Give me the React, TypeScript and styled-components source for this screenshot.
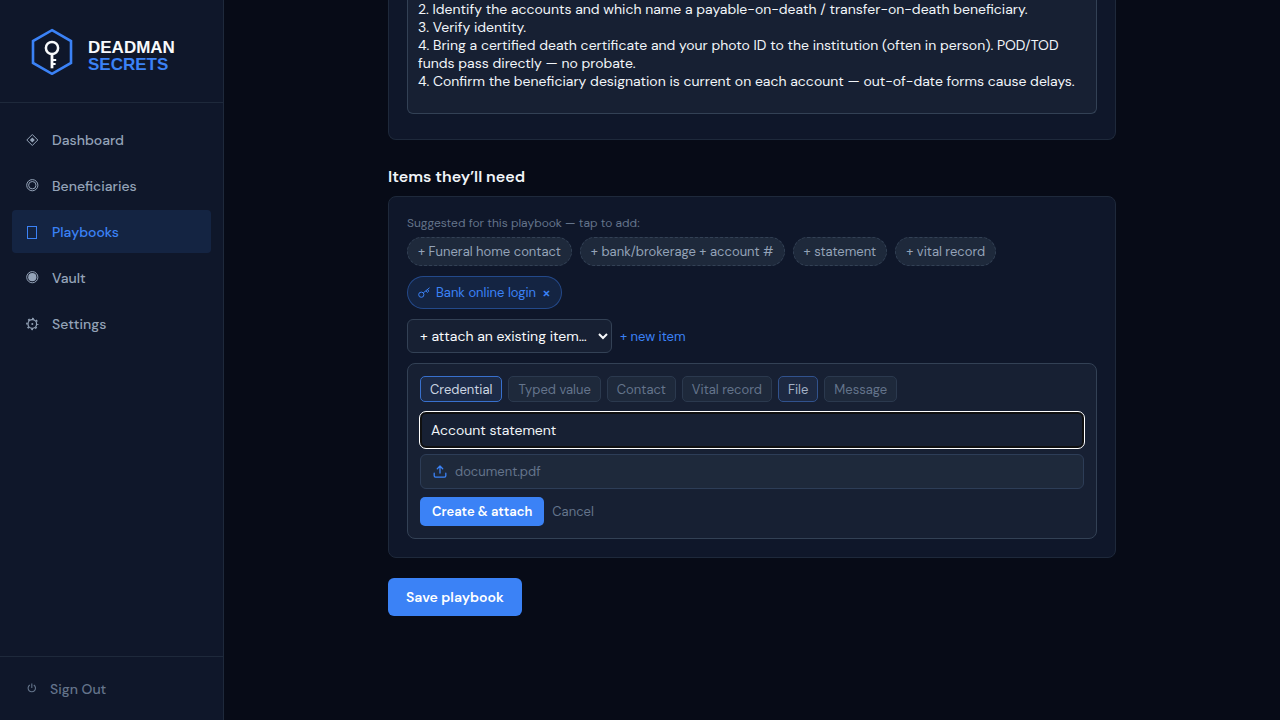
import React, { useState } from "react";
import styled, { createGlobalStyle, css } from "styled-components";

const GlobalStyle = createGlobalStyle`
  *, *::before, *::after { box-sizing: border-box; }
  body {
    margin: 0;
    background: #070b17;
    color: #f1f5f9;
    font-family: "DM Sans", Inter, "Liberation Sans", sans-serif;
    font-size: 14px;
  }
  button, input, select, textarea { font: inherit; }
  button { cursor: pointer; }
`;

const Shell = styled.div`
  display: flex;
  height: 100vh;
  overflow: hidden;
`;

const Sidebar = styled.aside`
  display: flex;
  flex-direction: column;
  flex: none;
  width: 224px;
  background: #0f172a;
  border-right: 1px solid #1e293b;
`;

const Brand = styled.a`
  display: flex;
  align-items: center;
  gap: 12px;
  height: 103px;
  padding: 0 28px;
  border-bottom: 1px solid #1e293b;
  text-decoration: none;
`;

const BrandName = styled.span`
  display: flex;
  flex-direction: column;
  padding-top: 10px;
  color: #f8fafc;
  font: bold 17px/17px "Liberation Sans", sans-serif;
`;

const BrandAccent = styled.span`
  color: #3b82f6;
`;

const Nav = styled.nav`
  display: flex;
  flex: 1;
  flex-direction: column;
  gap: 3px;
  padding: 15px 12px;
`;

const NavLink = styled.a<{ $active?: boolean }>`
  display: flex;
  align-items: center;
  gap: 12px;
  height: 43px;
  padding: 0 12px;
  border-radius: 4px;
  color: ${(p) => (p.$active ? "#3b82f6" : "#94a3b8")};
  background: ${(p) => (p.$active ? "rgba(59, 130, 246, 0.12)" : "transparent")};
  font-weight: 500;
  text-decoration: none;
`;

const SidebarFooter = styled.div`
  padding: 10px 12px;
  border-top: 1px solid #1e293b;
`;

const SignOut = styled.button`
  display: flex;
  align-items: center;
  gap: 10px;
  width: 100%;
  height: 43px;
  padding: 0 12px;
  border: 0;
  background: none;
  color: #64748b;
  font-weight: 500;
`;

const Main = styled.main`
  flex: 1;
  min-width: 0;
  overflow: hidden;
`;

const Content = styled.form`
  max-width: 728px;
  margin: 0 auto;
`;

const Card = styled.section<{ $continued?: boolean }>`
  display: flex;
  flex-direction: column;
  padding: 18px;
  border: 1px solid #1e293b;
  border-radius: 8px;
  background: #0f172a;
  ${(p) =>
    p.$continued &&
    css`
      padding-top: 0;
      padding-bottom: 25px;
      border-top: 0;
      border-radius: 0 0 8px 8px;
    `}
`;

const Steps = styled.textarea`
  display: block;
  width: 100%;
  padding: 0 10px 5px;
  border: 1px solid #334155;
  border-top: 0;
  border-radius: 0 0 6px 6px;
  background: #172033;
  color: #f1f5f9;
  line-height: 18px;
  resize: none;
  overflow: hidden;
`;

const Heading = styled.h2`
  margin: 25px 0 7px;
  font-size: 16px;
  font-weight: 600;
  line-height: 24px;
`;

const Hint = styled.p`
  margin: 0 0 6px;
  color: #64748b;
  font-size: 12px;
  line-height: 16px;
`;

const Row = styled.div<{ $gap?: number; $below?: number }>`
  display: flex;
  flex-wrap: wrap;
  align-items: center;
  gap: ${(p) => p.$gap ?? 8}px;
  margin-bottom: ${(p) => p.$below ?? 10}px;
`;

const Suggestion = styled.button`
  height: 29px;
  padding: 0 10px;
  border: 1px dashed #334155;
  border-radius: 15px;
  background: #1e293b;
  color: #94a3b8;
  font-size: 13px;
`;

const Chip = styled.span`
  display: inline-flex;
  align-items: center;
  gap: 6px;
  height: 33px;
  padding: 0 10px;
  border: 1px solid rgba(59, 130, 246, 0.4);
  border-radius: 17px;
  background: rgba(59, 130, 246, 0.12);
  color: #3b82f6;
  font-size: 13px;
`;

const ChipRemove = styled.button`
  padding: 0;
  border: 0;
  background: none;
  color: inherit;
  font-size: 16px;
  font-weight: 500;
  line-height: 16px;
`;

const ItemSelect = styled.select`
  width: 205px;
  height: 34px;
  padding: 0 8px;
  border: 1px solid #334155;
  border-radius: 6px;
  background: #172033;
  color: #f8fafc;
`;

const TextButton = styled.button<{ $muted?: boolean }>`
  padding: 0;
  border: 0;
  background: none;
  color: ${(p) => (p.$muted ? "#64748b" : "#3b82f6")};
  font-size: 13px;
`;

const Panel = styled.div`
  display: flex;
  flex-direction: column;
  padding: 12px;
  border: 1px solid #334155;
  border-radius: 8px;
  background: #172033;
`;

const kindTone = {
  idle: css`
    border-color: #2b394e;
    background: #1e293b;
    color: #64748b;
  `,
  leaving: css`
    border-color: #3870cd;
    background: #1d2b47;
    color: #cbd5e1;
  `,
  entering: css`
    border-color: #31528d;
    background: #1d2942;
    color: #a3b1c6;
  `,
};

const Kind = styled.button<{ $tone: keyof typeof kindTone }>`
  height: 26px;
  padding: 0 9px;
  border: 1px solid;
  border-radius: 5px;
  font-size: 13px;
  ${(p) => kindTone[p.$tone]}
`;

const NameInput = styled.input`
  width: 100%;
  height: 36px;
  margin-bottom: 6px;
  padding: 0 9px;
  border: 2px solid #101010;
  border-radius: 6px;
  outline: 1px solid #ffffff;
  background: #172033;
  color: #f1f5f9;
`;

const FileField = styled.button`
  display: flex;
  align-items: center;
  gap: 8px;
  width: 100%;
  height: 35px;
  margin-bottom: 8px;
  padding: 0 12px;
  border: 1px solid #2d3d57;
  border-radius: 6px;
  background: #1e293b;
  color: #64748b;
  font-size: 13px;
`;

const Primary = styled.button<{ $large?: boolean }>`
  height: ${(p) => (p.$large ? 38 : 29)}px;
  padding: 0 ${(p) => (p.$large ? 18 : 12)}px;
  border: 0;
  border-radius: ${(p) => (p.$large ? 6 : 5)}px;
  background: #3b82f6;
  color: #ffffff;
  font-size: ${(p) => (p.$large ? 14 : 13)}px;
  font-weight: 600;
`;

const Actions = styled.div`
  padding-top: 20px;
`;

const LogoMark = () => (
  <svg width="48" height="48" viewBox="0 0 48 48" fill="none" aria-hidden="true">
    <path d="M24 3.200 43 14v22L24 46.800 5 36V14Z" stroke="#3b82f6" strokeWidth="2.600" />
    <circle cx="24" cy="21" r="6.100" stroke="#f8fafc" strokeWidth="2.500" />
    <path d="M24 27V41.300" stroke="#f8fafc" strokeWidth="2.800" />
    <path d="M25 33h3.200M25 37h2.600" stroke="#f8fafc" strokeWidth="1.900" />
  </svg>
);

const KeyIcon = () => (
  <svg width="12" height="12" viewBox="0 0 12 12" fill="none" stroke="currentColor" aria-hidden="true">
    <circle cx="3.300" cy="7.700" r="2.600" />
    <path d="M5.300 5.900 11.500.8M7.800 3.900l1.500 1.500 1.500-1.300L9.400 2.500" />
  </svg>
);

const UploadIcon = () => (
  <svg
    width="14"
    height="14"
    viewBox="0 0 14 14"
    fill="none"
    stroke="#3b82f6"
    strokeWidth="1.300"
    strokeLinecap="round"
    strokeLinejoin="round"
    aria-hidden="true"
  >
    <path d="M7 8V1.200M4.300 3.700 7 1l2.700 2.700M1.200 8.200v2.600c0 .8.500 1.300 1.300 1.300h9c.8 0 1.300-.5 1.300-1.300V8.200" />
  </svg>
);

const NavIcon = ({ children }: { children: React.ReactNode }) => (
  <svg width="16" height="16" viewBox="0 0 16 16" fill="none" stroke="currentColor" aria-hidden="true">
    {children}
  </svg>
);

const navItems = [
  {
    label: "Dashboard",
    icon: (
      <>
        <path d="M8.300 2.500 13.800 8l-5.500 5.500L2.800 8Z" />
        <path d="M8.300 5.500 10.800 8l-2.500 2.500L5.800 8Z" fill="currentColor" stroke="none" />
      </>
    ),
  },
  {
    label: "Beneficiaries",
    icon: (
      <>
        <circle cx="8.300" cy="7.200" r="5.600" />
        <circle cx="8.300" cy="7.200" r="3.700" />
      </>
    ),
  },
  { label: "Playbooks", icon: <rect x="3.500" y="2.500" width="9" height="12" />, active: true },
  {
    label: "Vault",
    icon: (
      <>
        <circle cx="8.300" cy="7.200" r="5.600" />
        <circle cx="8.300" cy="7.200" r="4.100" fill="currentColor" stroke="none" />
      </>
    ),
  },
  {
    label: "Settings",
    icon: (
      <>
        <circle cx="8.300" cy="8" r="4.300" strokeWidth="1.200" />
        <circle cx="8.300" cy="8" r="5.400" strokeWidth="1.500" strokeDasharray="1.800 2.440" strokeDashoffset="0.900" />
        <circle cx="8.300" cy="8" r="1" fill="currentColor" stroke="none" />
      </>
    ),
  },
];

const suggestions = ["Funeral home contact", "bank/brokerage + account #", "statement", "vital record"];

const kinds: { label: string; tone: keyof typeof kindTone }[] = [
  { label: "Credential", tone: "leaving" },
  { label: "Typed value", tone: "idle" },
  { label: "Contact", tone: "idle" },
  { label: "Vital record", tone: "idle" },
  { label: "File", tone: "entering" },
  { label: "Message", tone: "idle" },
];

const stepsText = `2. Identify the accounts and which name a payable-on-death / transfer-on-death beneficiary.
3. Verify identity.
4. Bring a certified death certificate and your photo ID to the institution (often in person). POD/TOD funds pass directly — no probate.
4. Confirm the beneficiary designation is current on each account — out-of-date forms cause delays.`;

export default function App() {
  const [steps, setSteps] = useState(stepsText);
  const [name, setName] = useState("Account statement");

  return (
    <>
      <GlobalStyle />
      <Shell>
        <Sidebar>
          <Brand href="#">
            <LogoMark />
            <BrandName>
              DEADMAN <BrandAccent>SECRETS</BrandAccent>
            </BrandName>
          </Brand>
          <Nav>
            {navItems.map((item) => (
              <NavLink key={item.label} href="#" $active={item.active}>
                <NavIcon>{item.icon}</NavIcon>
                {item.label}
              </NavLink>
            ))}
          </Nav>
          <SidebarFooter>
            <SignOut type="button">
              <NavIcon>
                <path d="M5.800 4A3.700 3.700 0 1 0 9.800 4M7.800 2.500V7" strokeWidth="1.100" />
              </NavIcon>
              Sign Out
            </SignOut>
          </SidebarFooter>
        </Sidebar>
        <Main>
          <Content onSubmit={(e) => e.preventDefault()}>
            <Card $continued>
              <Steps
                aria-label="Steps"
                rows={6}
                value={steps}
                spellCheck={false}
                onChange={(e) => setSteps(e.target.value)}
              />
            </Card>
            <Heading>Items they’ll need</Heading>
            <Card>
              <Hint>Suggested for this playbook — tap to add:</Hint>
              <Row>
                {suggestions.map((s) => (
                  <Suggestion key={s} type="button">
                    + {s}
                  </Suggestion>
                ))}
              </Row>
              <Row>
                <Chip>
                  <KeyIcon />
                  Bank online login
                  <ChipRemove type="button" aria-label="Remove Bank online login">
                    ×
                  </ChipRemove>
                </Chip>
              </Row>
              <Row>
                <ItemSelect aria-label="Attach an existing item">
                  <option>+ attach an existing item…</option>
                </ItemSelect>
                <TextButton type="button">+ new item</TextButton>
              </Row>
              <Panel>
                <Row $gap={6}>
                  {kinds.map((k) => (
                    <Kind key={k.label} type="button" $tone={k.tone}>
                      {k.label}
                    </Kind>
                  ))}
                </Row>
                <NameInput aria-label="Item name" value={name} onChange={(e) => setName(e.target.value)} />
                <FileField type="button">
                  <UploadIcon />
                  document.pdf
                </FileField>
                <Row $below={0}>
                  <Primary type="button">Create &amp; attach</Primary>
                  <TextButton type="button" $muted>
                    Cancel
                  </TextButton>
                </Row>
              </Panel>
            </Card>
            <Actions>
              <Primary type="submit" $large>
                Save playbook
              </Primary>
            </Actions>
          </Content>
        </Main>
      </Shell>
    </>
  );
}
